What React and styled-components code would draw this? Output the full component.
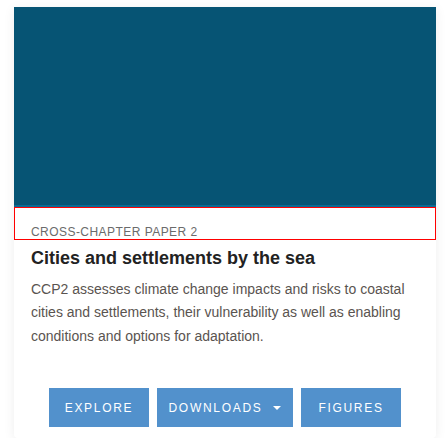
import React from 'react';
import styled, { createGlobalStyle } from 'styled-components';

const GlobalStyle = createGlobalStyle`
  body {
    margin: 0;
    background: #ffffff;
    font-family: "Liberation Sans", Arial, sans-serif;
  }
`;

const Card = styled.div`
  margin: 7px 0 0 14px;
  width: 422px;
  background: #ffffff;
  border-radius: 0 0 4px 4px;
  box-shadow: 0 2px 12px rgba(0, 0, 0, 0.07);
  padding-bottom: 11px;
`;

const Cover = styled.div`
  height: 198px;
  background: #065474;
  border-bottom: 2px solid #0a6a92;
`;

const Label = styled.div`
  box-sizing: border-box;
  height: 33px;
  outline: 1px solid #ff0000;
  outline-offset: -1px;
  padding: 19px 17px 0;
  font-size: 12px;
  line-height: 12px;
  letter-spacing: 0.45px;
  color: #6b6b6b;
  text-transform: uppercase;
`;

const Body = styled.div`
  padding: 0 17px;
`;

const Title = styled.h2`
  margin: 7px 0 0;
  font-size: 18px;
  line-height: 22px;
  font-weight: 700;
  color: #222222;
`;

const Summary = styled.p`
  margin: 9px 0 0;
  font-size: 14px;
  line-height: 23.4px;
  color: #5a5450;
`;

const Actions = styled.div`
  display: flex;
  justify-content: center;
  gap: 8px;
  margin-top: 40px;
`;

const Button = styled.button`
  display: flex;
  align-items: center;
  justify-content: center;
  gap: 11px;
  width: ${props => props.$width}px;
  height: 39px;
  padding: 0;
  border: none;
  background: #5291cc;
  color: #ffffff;
  font-family: "Liberation Sans", Arial, sans-serif;
  font-size: 12px;
  letter-spacing: 1.7px;
  text-transform: uppercase;
  cursor: pointer;
`;

const Caret = styled.span`
  width: 0;
  height: 0;
  border-left: 4px solid transparent;
  border-right: 4px solid transparent;
  border-top: 4px solid #ffffff;
`;

export default function App() {
  return (
    <>
      <GlobalStyle />
      <Card>
        <Cover />
        <Label>Cross-Chapter Paper 2</Label>
        <Body>
          <Title>Cities and settlements by the sea</Title>
          <Summary>
            CCP2 assesses climate change impacts and risks to coastal cities and settlements, their
            vulnerability as well as enabling conditions and options for adaptation.
          </Summary>
        </Body>
        <Actions>
          <Button $width={100}>Explore</Button>
          <Button $width={136}>
            <span>Downloads</span>
            <Caret />
          </Button>
          <Button $width={100}>Figures</Button>
        </Actions>
      </Card>
    </>
  );
}
